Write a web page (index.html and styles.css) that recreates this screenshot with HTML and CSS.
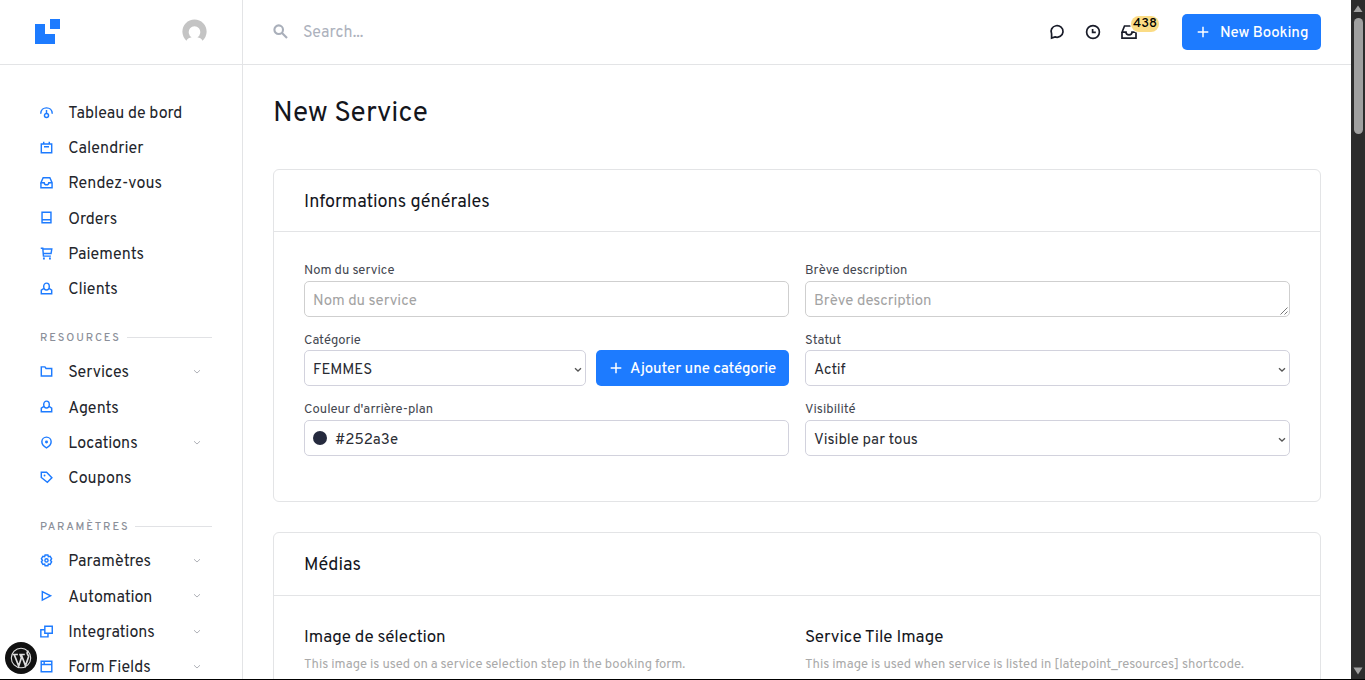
FILE: index.html
```html
<!DOCTYPE html>
<html lang="fr">
<head>
<meta charset="utf-8">
<title>New Service</title>
<link rel="stylesheet" href="styles.css">
</head>
<body>
<svg class="defs" width="0" height="0">
  <symbol id="chev" viewBox="0 0 8 6"><path d="M1 1.200l3 2.800 3-2.800" fill="none" stroke="currentColor"/></symbol>
  <symbol id="user" viewBox="0 0 14 14"><path d="M4.300 6.900L1.400 8.700v4h11.200v-4L9.700 6.900"/><ellipse cx="7" cy="4.900" rx="3" ry="3.700"/></symbol>
  <symbol id="inbox" viewBox="0 0 14 14"><path d="M1 7.200v5.400h12V7.200L10.600 1.800H3.400L1 7.200h3.500c0 3 5 3 5 0H13"/></symbol>
  <symbol id="plus" viewBox="0 0 12 12"><path d="M6 .7v10.600M.7 6h10.600" stroke="currentColor" stroke-width="1.500"/></symbol>
</svg>
<div class="app">
  <aside class="sidebar">
    <div class="brand">
      <svg class="logo" viewBox="0 0 25 25"><path d="M15 0h10v10H15zM0 5h10v10h10v10H0z"/></svg>
      <svg class="avatar" viewBox="0 0 26 26"><path d="M4.600 22.500A12.600 12.600 0 1 1 21.400 22.500C20.300 20.400 18.200 19.500 16 19A6 6.200 0 1 0 10 19C7.800 19.500 5.700 20.400 4.600 22.500Z"/></svg>
    </div>
    <nav class="menu">
      <a class="item"><svg class="ico" viewBox="0 0 14 14"><path d="M.8 8.300C.8-.1 13.200-.1 13.200 8.300M7 4.200v4"/><circle cx="7" cy="10.200" r="2.200"/></svg><span>Tableau de bord</span></a>
      <a class="item"><svg class="ico" viewBox="0 0 14 14"><path d="M1.400 3.200h11.200v9.400H1.400zM4 .8v2.400M10 .8v2.400M4.300 6.200h5.400"/></svg><span>Calendrier</span></a>
      <a class="item"><svg class="ico"><use href="#inbox"/></svg><span>Rendez-vous</span></a>
      <a class="item"><svg class="ico" viewBox="0 0 14 14"><path d="M2.200 12.600V1.400h9.600v11.200zM2.200 9.500h9.600"/></svg><span>Orders</span></a>
      <a class="item"><svg class="ico" viewBox="0 0 14 14"><path d="M.8 1.400h2.200l.7 8.400h8M3 2.200h9.700l-.8 4.900H3.500"/><path d="M3.200 11.400h2v2h-2zM9.700 11.400h2v2h-2z" class="solid"/></svg><span>Paiements</span></a>
      <a class="item"><svg class="ico"><use href="#user"/></svg><span>Clients</span></a>
      <div class="heading"><span>RESOURCES</span></div>
      <a class="item"><svg class="ico" viewBox="0 0 14 14"><path d="M1.400 11.800V2h3.900l1.200 1.700h6.100v8.100z"/></svg><span>Services</span><svg class="chev"><use href="#chev"/></svg></a>
      <a class="item"><svg class="ico"><use href="#user"/></svg><span>Agents</span></a>
      <a class="item"><svg class="ico" viewBox="0 0 14 14"><path d="M7 12.900C3.500 10.900 2 8.600 2 6.200a5 5 0 0 1 10 0c0 2.400-1.500 4.700-5 6.700z"/><circle cx="7" cy="6.500" r="1.600" class="solid"/></svg><span>Locations</span><svg class="chev"><use href="#chev"/></svg></a>
      <a class="item"><svg class="ico" viewBox="0 0 14 14"><path d="M1.400 1.400h5.700l5.700 5.800-4.900 5L1.400 7z"/><circle cx="4.900" cy="4.900" r="1" class="solid"/></svg><span>Coupons</span></a>
      <div class="heading"><span>PARAMÈTRES</span></div>
      <a class="item"><svg class="ico" viewBox="0 0 14 14"><path d="M5.500 1.100h3l.5 1.800 1.900-.4 1.600 2.600L11.300 7l1.200 1.500-1.600 2.700-1.900-.4-.5 1.900h-3L5 10.800l-1.900.4-1.600-2.700L2.700 7 1.500 5.100l1.600-2.600 1.900.4z"/><circle cx="7" cy="6.900" r="1.700"/></svg><span>Paramètres</span><svg class="chev"><use href="#chev"/></svg></a>
      <a class="item"><svg class="ico" viewBox="0 0 14 14"><path d="M2.500 2.800v9.200l8.900-4.600z"/></svg><span>Automation</span><svg class="chev"><use href="#chev"/></svg></a>
      <a class="item"><svg class="ico" viewBox="0 0 14 14"><path d="M5.200 1.300h8v7.500h-8zM5.200 5.200H.9v7.600h7.700V9"/></svg><span>Integrations</span><svg class="chev"><use href="#chev"/></svg></a>
      <a class="item"><svg class="ico" viewBox="0 0 14 14"><path d="M1.300 1.300h11.400v11.400H1.300zM1.300 4.900h11.400M4.500 1.300v3.300"/></svg><span>Form Fields</span><svg class="chev"><use href="#chev"/></svg></a>
    </nav>
    <a class="wp"><svg viewBox="0 0 32 32"><circle cx="16" cy="16" r="16" fill="#111"/><circle cx="16" cy="16" r="9.700" fill="none" stroke="#ddd" stroke-width="1.100"/><path d="M7.600 12.500h5.300M14.200 12.500h5.600M9.200 12.500l4.500 11.500 2.700-8.200-1.200-3.300M16.200 12.500l4.300 11.300 3-8.700c.5-1.700-1.400-2.700-1.400-4.200 0-1 .8-1.600 1.500-1.600" fill="none" stroke="#ddd" stroke-width="1.700"/></svg></a>
  </aside>
  <main class="main">
    <header class="topbar">
      <svg class="mag" viewBox="0 0 15 15"><circle cx="5.700" cy="5.700" r="4.300"/><path d="M9 9l5 5"/></svg>
      <span class="search">Search...</span>
      <div class="tools">
        <svg class="tool" viewBox="0 0 16 16"><path d="M2.600 14.100V9.900A6 5.800 0 1 1 6 12.900z"/></svg>
        <svg class="tool" viewBox="0 0 16 16"><circle cx="8" cy="8" r="6.400"/><path d="M7.600 5v3.400h3.200"/></svg>
        <div class="inboxwrap"><svg class="tool" viewBox="0 0 16 16"><path d="M1 8.200v5.900h14V8.200L12.500 2h-9L1 8.200h4c0 3.500 6 3.500 6 0h4"/></svg><span class="badge">438</span></div>
      </div>
      <a class="btn booking"><svg class="plus"><use href="#plus"/></svg><span>New Booking</span></a>
    </header>
    <section class="content">
      <h1 class="title">New Service</h1>
      <div class="card">
        <div class="cardhead">Informations générales</div>
        <div class="grid">
          <div class="field"><label>Nom du service</label><div class="control gray"><span>Nom du service</span></div></div>
          <div class="field"><label>Brève description</label><div class="control gray"><span>Brève description</span><svg class="grip" viewBox="0 0 8 8"><path d="M.5 7.500l7-7M4.500 7.500l3-3"/></svg></div></div>
          <div class="field"><label class="low">Catégorie</label><div class="split"><div class="control"><span>FEMMES</span><svg class="arrow"><use href="#chev"/></svg></div><a class="btn add"><svg class="plus"><use href="#plus"/></svg><span>Ajouter une catégorie</span></a></div></div>
          <div class="field"><label class="low">Statut</label><div class="control"><span>Actif</span><svg class="arrow"><use href="#chev"/></svg></div></div>
          <div class="field"><label>Couleur d'arrière-plan</label><div class="control"><i class="swatch"></i><span>#252a3e</span></div></div>
          <div class="field"><label>Visibilité</label><div class="control"><span>Visible par tous</span><svg class="arrow"><use href="#chev"/></svg></div></div>
        </div>
      </div>
      <div class="card">
        <div class="cardhead second">Médias</div>
        <div class="media">
          <div><h3>Image de sélection</h3><p>This image is used on a service selection step in the booking form.</p></div>
          <div><h3>Service Tile Image</h3><p>This image is used when service is listed in [latepoint_resources] shortcode.</p></div>
        </div>
      </div>
    </section>
  </main>
  <div class="scroll"><svg viewBox="0 0 14 10"><path d="M7 1.500l4.500 6.500h-9z"/></svg><i class="thumb"></i><svg class="down" viewBox="0 0 14 10"><path d="M7 8.500L2.500 1.500h9z"/></svg></div>
</div>
</body>
</html>
```
FILE: styles.css
```css
* { box-sizing: border-box; }
body { margin: 0; height: 680px; overflow: hidden; background: #000; font-family: Overpass, Roboto, sans-serif; color: #14161d; }
svg { display: block; flex: none; }
.defs { position: absolute; }
.app { display: flex; height: 679px; overflow: hidden; background: #fff; }
.sidebar { position: relative; width: 243px; flex: none; border-right: 1px solid #e3e4e6; height: 679px; }
.brand { height: 65px; border-bottom: 1px solid #e3e4e6; display: flex; justify-content: space-between; align-items: flex-start; padding: 19px 35px 0 35px; }
.logo { width: 25px; height: 25px; fill: #1d7bff; }
.avatar { width: 25px; height: 25px; fill: #c4c4c4; }
.menu { padding: 30px 30px 0 40px; }
.item { display: flex; align-items: center; height: 35.250px; font-size: 16px; color: #23252b; white-space: nowrap; }
.item span { padding-top: 2.400px; letter-spacing: .02px; }
.ico { width: 13px; height: 13px; margin: -1px 15.200px 0 0; fill: none; stroke: #1d7bff; stroke-width: 1.550; }
.solid { fill: #1d7bff; stroke: none; }
.chev { width: 8px; height: 6px; margin: 0 11px 0 auto; color: #b0b2b8; }
.heading { display: flex; align-items: center; height: 48px; padding-top: 15px; gap: 6px; font-size: 11px; font-weight: 500; letter-spacing: 1.900px; color: #8b8f99; }
.heading::after { content: ""; flex: 1; height: 1px; margin-top: -2px; background: #e1e2e5; }
.wp { position: absolute; left: 5px; top: 642px; width: 32px; height: 32px; }
.main { width: 1108px; flex: none; }
.topbar { height: 65px; border-bottom: 1px solid #e3e4e6; display: flex; align-items: center; padding: 0 30px 0 31px; }
.mag { width: 15px; height: 15px; margin: -1px 0 0 -1px; fill: none; stroke: #a9afba; stroke-width: 2.100; }
.search { margin-left: 15px; padding-top: 2px; font-size: 16px; color: #adb2bd; letter-spacing: .05px; }
.tools { margin-left: auto; display: flex; gap: 20px; margin-right: 45px; }
.tool { width: 16px; height: 16px; fill: none; stroke: #191c29; stroke-width: 1.700; }
.inboxwrap { position: relative; }
.badge { position: absolute; left: 10px; top: -8px; width: 28px; height: 16px; border-radius: 8px; background: #fbdc85; box-shadow: 0 0 0 1px #fff; color: #000; font-size: 13px; line-height: 17px; font-weight: 500; text-align: center; }
.btn { display: flex; align-items: center; height: 36px; border-radius: 5px; background: #1d7bff; color: #fff; font-size: 15px; font-weight: 500; white-space: nowrap; letter-spacing: -.12px; }
.btn span { padding-top: 2px; }
.plus { width: 12px; height: 12px; }
.booking { width: 139px; padding-left: 15px; gap: 11px; }
.content { padding: 0 30px; }
.title { margin: 0; height: 104px; padding-top: 30px; font-size: 28px; line-height: 38px; font-weight: 400; }
.card { border: 1px solid #e3e4e6; border-radius: 6px; margin-bottom: 30px; height: 333px; }
.cardhead { height: 62px; border-bottom: 1px solid #e3e4e6; padding: 3px 30px 0; display: flex; align-items: center; font-size: 18px; letter-spacing: .05px; }
.cardhead.second { height: 63px; }
.grid { display: grid; grid-template-columns: 485px 485px; grid-template-rows: 69px 70px 70px; column-gap: 16px; padding: 30px 30px 0; }
label { display: flex; align-items: center; height: 19px; font-size: 13px; line-height: 15px; color: #43464f; white-space: nowrap; letter-spacing: .03px; }
label.low { padding-top: 2px; }
.control { position: relative; display: flex; align-items: center; height: 36px; border: 1px solid #d2d2dd; border-radius: 5px; padding: 0 8px; font-size: 15px; color: #2a2c33; flex: 1; }
.control span { padding-top: 4px; }
.control.gray { color: #a3a3a3; border-color: #cfcfcf; }
.split { display: flex; gap: 10px; }
.add { width: 193px; padding-left: 14px; gap: 8px; }
.arrow { width: 8px; height: 6px; margin: 3px -5px 0 auto; color: #555; stroke-width: 1.300; }
.grip { position: absolute; right: 1px; bottom: 1px; width: 8px; height: 8px; stroke: #555; stroke-width: .8; fill: none; }
.swatch { width: 14px; height: 14px; border-radius: 7px; background: #252a3e; margin-right: 8px; }
.media { display: grid; grid-template-columns: 485px 485px; column-gap: 16px; padding: 32px 30px 0; white-space: nowrap; }
h3 { margin: 0; font-size: 17px; line-height: 20px; font-weight: 400; letter-spacing: -.04px; }
p { margin: 9px 0 0; font-size: 13px; line-height: 16px; color: #aaa; letter-spacing: -.01px; }
.scroll { width: 14px; flex: none; background: #2c2c2c; display: flex; flex-direction: column; align-items: center; padding-top: 4px; }
.scroll svg { width: 14px; height: 10px; fill: #a0a0a0; }
.thumb { width: 9px; height: 116px; margin: 4px 0 0 1px; border-radius: 5px; background: #a0a0a0; }
.scroll .down { margin: auto 0 3px; }
```
